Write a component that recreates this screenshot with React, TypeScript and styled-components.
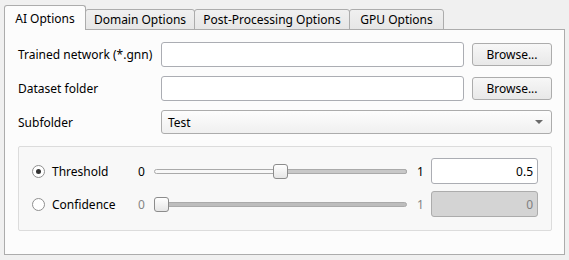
import React from "react";
import styled, { createGlobalStyle } from "styled-components";

const Global = createGlobalStyle`
  html, body { margin: 0; padding: 0; background: #f0f0f0; }
  body { font-family: "Noto Sans", "Open Sans", Arial, sans-serif; font-size: 12px; color: #000; }
  * { box-sizing: border-box; }
`;

const Root = styled.div`
  width: 569px;
  height: 260px;
  padding: 5px 0 0 4px;
`;

const TabBar = styled.div`
  display: flex;
  align-items: flex-end;
  height: 25px;
  position: relative;
  z-index: 1;
  margin-bottom: -1px;
`;

const Tab = styled.div<{ $active?: boolean; $w: number }>`
  width: ${(p) => p.$w}px;
  height: ${(p) => (p.$active ? 25 : 21)}px;
  display: flex;
  align-items: center;
  justify-content: center;
  border: 1px solid #acacac;
  border-bottom: ${(p) => (p.$active ? "none" : "1px solid #acacac")};
  margin-left: ${(p) => (p.$active ? 0 : -1)}px;
  border-radius: 3px 3px 0 0;
  background: ${(p) => (p.$active ? "#fcfcfc" : "linear-gradient(#f0f0f0, #e6e6e6)")};
  padding-top: ${(p) => (p.$active ? 1 : 0)}px;
  &:first-child { margin-left: 0; }
`;

const Panel = styled.div`
  width: 561px;
  height: 226px;
  border: 1px solid #acacac;
  background: #fcfcfc;
  padding: 12px 12px 0 12px;
`;

const Row = styled.div`
  display: grid;
  grid-template-columns: 136px 1fr 80px;
  column-gap: 8px;
  align-items: center;
  height: 25px;
  margin-bottom: 9px;
`;

const SelectRow = styled(Row)`
  grid-template-columns: 136px 1fr;
  height: 24px;
`;

const Label = styled.div`
  padding-left: 1px;
  white-space: nowrap;
`;

const TextInput = styled.div`
  height: 25px;
  border: 1px solid #abadb3;
  border-radius: 3px;
  background: #fff;
`;

const Button = styled.div`
  height: 23px;
  border: 1px solid #acacac;
  border-radius: 3px;
  background: linear-gradient(#f7f7f7, #e8e8e8);
  display: flex;
  align-items: center;
  justify-content: center;
`;

const Select = styled.div`
  height: 24px;
  border: 1px solid #acacac;
  border-radius: 3px;
  background: linear-gradient(#fdfdfd, #f0f0f0);
  display: flex;
  align-items: center;
  justify-content: space-between;
  padding: 0 8px 0 6px;
`;

const Arrow = styled.div`
  width: 0;
  height: 0;
  border-left: 4px solid transparent;
  border-right: 4px solid transparent;
  border-top: 4px solid #6a6a6a;
`;

const Group = styled.div`
  margin: 12px 0 0 1px;
  height: 85px;
  width: 534px;
  border: 1px solid #dcdcdc;
  border-radius: 2px;
  background: #f8f8f8;
  padding: 11px 13px 0 13px;
  display: flex;
  flex-direction: column;
  gap: 7px;
`;

const OptRow = styled.div`
  display: flex;
  align-items: center;
  height: 26px;
  & > * { flex-shrink: 0; }
`;

const Radio = styled.div<{ $checked?: boolean }>`
  width: 13px;
  height: 13px;
  border-radius: 50%;
  border: 1px solid #8f8f8f;
  background: #fff;
  display: flex;
  align-items: center;
  justify-content: center;
  &::after {
    content: "";
    display: ${(p) => (p.$checked ? "block" : "none")};
    width: 5px;
    height: 5px;
    border-radius: 50%;
    background: #333;
  }
`;

const OptLabel = styled.div`
  width: 86px;
  margin-left: 7px;
`;

const Num = styled.div<{ $disabled?: boolean; $w: number }>`
  width: ${(p) => p.$w}px;
  color: ${(p) => (p.$disabled ? "#858585" : "#000")};
`;

const Slider = styled.div`
  position: relative;
  width: 253px;
  height: 15px;
  display: flex;
  align-items: center;
  margin-right: 10px;
`;

const Track = styled.div<{ $disabled?: boolean }>`
  width: 100%;
  height: 5px;
  border-radius: 3px;
  border: 1px solid #aaaaaa;
  background: ${(p) => (p.$disabled ? "#bdbdbd" : "#f8f8f8")};
`;

const Filled = styled.div`
  position: absolute;
  top: 5px;
  right: 0;
  height: 5px;
  border-radius: 0 3px 3px 0;
  border: 1px solid #aaaaaa;
  border-left: none;
  background: #c8c8c8;
`;

const Thumb = styled.div`
  position: absolute;
  top: 0;
  width: 15px;
  height: 15px;
  border: 1px solid #8c8c8c;
  border-radius: 3px;
  background: linear-gradient(#ffffff, #e6e6e6);
`;

const Spin = styled.div<{ $disabled?: boolean }>`
  width: 107px;
  height: 26px;
  border: 1px solid ${(p) => (p.$disabled ? "#acacac" : "#abadb3")};
  border-radius: 3px;
  background: ${(p) => (p.$disabled ? "#d4d4d4" : "#fff")};
  color: ${(p) => (p.$disabled ? "#7f7f7f" : "#000")};
  display: flex;
  align-items: center;
  justify-content: flex-end;
  padding-right: 4px;
`;

type SliderProps = { pos: number; disabled?: boolean };
const SliderView: React.FC<SliderProps> = ({ pos, disabled }) => (
  <Slider>
    <Track $disabled={disabled} />
    {!disabled && <Filled style={{ left: pos + 7 }} />}
    <Thumb style={{ left: pos }} />
  </Slider>
);

export default function App() {
  return (
    <Root>
      <Global />
      <TabBar>
        <Tab $active $w={82}>AI Options</Tab>
        <Tab $w={110}>Domain Options</Tab>
        <Tab $w={156}>Post-Processing Options</Tab>
        <Tab $w={95}>GPU Options</Tab>
      </TabBar>
      <Panel>
        <Row>
          <Label>Trained network (*.gnn)</Label>
          <TextInput />
          <Button>Browse...</Button>
        </Row>
        <Row>
          <Label>Dataset folder</Label>
          <TextInput />
          <Button>Browse...</Button>
        </Row>
        <SelectRow>
          <Label>Subfolder</Label>
          <Select>
            <span>Test</span>
            <Arrow />
          </Select>
        </SelectRow>
        <Group>
          <OptRow>
            <Radio $checked />
            <OptLabel>Threshold</OptLabel>
            <Num $w={16}>0</Num>
            <SliderView pos={119} />
            <Num $w={14}>1</Num>
            <Spin>0.5</Spin>
          </OptRow>
          <OptRow>
            <Radio />
            <OptLabel>Confidence</OptLabel>
            <Num $w={16} $disabled>0</Num>
            <SliderView pos={0} disabled />
            <Num $w={14} $disabled>1</Num>
            <Spin $disabled>0</Spin>
          </OptRow>
        </Group>
      </Panel>
    </Root>
  );
}
